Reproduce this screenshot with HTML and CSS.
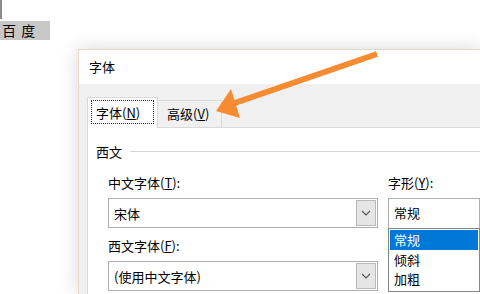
FILE: index.html
```html
<!DOCTYPE html>
<html lang="zh">
<head>
<meta charset="utf-8">
<link rel="stylesheet" href="styles.css">
</head>
<body>
<div class="doc">
  <div class="caret"></div>
  <div class="sel">百 度</div>
</div>

<div class="dialog">
  <div class="titlebar">字体</div>
  <div class="body">
    <div class="tabs">
      <div class="tab active"><span class="focus">字体(<u>N</u>)</span></div>
      <div class="tab">高级(<u>V</u>)</div>
    </div>
    <div class="panel">
      <div class="group"><span>西文</span><i class="rule"></i></div>
      <div class="fields">
        <div class="col-left">
          <div class="label">中文字体(<u>T</u>):</div>
          <div class="combo"><span>宋体</span><b class="dd"><svg width="10" height="6" viewBox="0 0 10 6"><path d="M1 1 L5 5 L9 1" fill="none" stroke="#555" stroke-width="1.1"/></svg></b></div>
          <div class="label second">西文字体(<u>F</u>):</div>
          <div class="combo"><span>(使用中文字体)</span><b class="dd"><svg width="10" height="6" viewBox="0 0 10 6"><path d="M1 1 L5 5 L9 1" fill="none" stroke="#555" stroke-width="1.1"/></svg></b></div>
        </div>
        <div class="col-right">
          <div class="label">字形(<u>Y</u>):</div>
          <div class="edit">常规</div>
          <ul class="list">
            <li class="on">常规</li>
            <li>倾斜</li>
            <li>加粗</li>
          </ul>
        </div>
      </div>
    </div>
  </div>
</div>

<svg class="arrow" width="480" height="294" viewBox="0 0 480 294">
  <line x1="377" y1="54" x2="226" y2="106" stroke="#f68b32" stroke-width="6"/>
  <polygon points="216,111 231,89 240,118" fill="#f68b32"/>
</svg>
</body>
</html>
```
FILE: styles.css
```css
html, body {
  margin: 0;
  padding: 0;
}
body {
  width: 480px;
  height: 294px;
  overflow: hidden;
  background: #ffffff;
  position: relative;
  font-family: "Noto Sans CJK SC", "Noto Sans", sans-serif;
  font-size: 13px;
  color: #000;
}
.doc {
  display: flex;
  flex-direction: column;
}
.caret {
  width: 2px;
  height: 19px;
  background: #8a8a8a;
}
.sel {
  margin-top: 2px;
  width: 48px;
  height: 19px;
  line-height: 19px;
  background: #c8c8c8;
  padding-left: 2px;
  font-size: 14px;
  letter-spacing: 1px;
}
.dialog {
  position: absolute;
  left: 78px;
  top: 49px;
  width: 401px;
  height: 244px;
  overflow: hidden;
  background: #f0f0f0;
  border: 1px solid #e2dcc8;
  border-right: none;
  border-bottom: none;
  box-shadow: 0 0 18px rgba(0, 0, 0, 0.16);
  display: flex;
  flex-direction: column;
}
.titlebar {
  flex: none;
  height: 34px;
  line-height: 34px;
  background: #ffffff;
  padding-left: 10px;
  font-size: 13px;
}
.body {
  padding: 13px 0 0 8px;
  display: flex;
  flex-direction: column;
}
.tabs {
  display: flex;
  align-items: flex-end;
  height: 30px;
}
.tab {
  height: 27px;
  line-height: 26px;
  padding: 0 9px;
  border: 1px solid #d9d9d9;
  border-bottom: none;
  background: #f0f0f0;
  box-sizing: border-box;
  margin-left: -1px;
  width: 65px;
}
.tab.active {
  width: 71px;
  height: 31px;
  background: #ffffff;
  margin-left: 0;
  margin-bottom: -1px;
  padding: 2px 3px 0 3px;
  position: relative;
  z-index: 1;
}
.focus {
  display: block;
  border: 1px dotted #333;
  height: 24px;
  line-height: 23px;
  padding: 0 4px;
  box-sizing: border-box;
}
u {
  text-decoration: underline;
  text-underline-offset: 1px;
}
.panel {
  background: #ffffff;
  border: 1px solid #d9d9d9;
  border-right: none;
  height: 200px;
  padding: 14px 0 0 8px;
}
.group {
  display: flex;
  align-items: center;
  height: 18px;
}
.rule {
  flex: 1;
  height: 1px;
  background: #d7d7d7;
  margin-left: 8px;
}
.fields {
  display: flex;
  gap: 10px;
  padding: 14px 0 0 12px;
}
.col-left {
  width: 270px;
  display: flex;
  flex-direction: column;
}
.col-right {
  flex: 1;
  display: flex;
  flex-direction: column;
}
.label {
  height: 18px;
  line-height: 18px;
  margin-bottom: 6px;
}
.label.second {
  margin-top: 9px;
}
.combo {
  height: 30px;
  border: 1px solid #adadad;
  box-sizing: border-box;
  background: #fff;
  display: flex;
  align-items: center;
  justify-content: space-between;
  padding: 1px 1px 1px 5px;
}
.dd {
  width: 20px;
  height: 26px;
  background: #e5e5e5;
  border: 1px solid #b9b9b9;
  box-sizing: border-box;
  display: flex;
  align-items: center;
  justify-content: center;
}
.edit {
  height: 30px;
  line-height: 28px;
  border: 1px solid #adadad;
  border-bottom: none;
  box-sizing: border-box;
  padding-left: 5px;
  background: #fff;
}
.list {
  list-style: none;
  margin: 0;
  padding: 1px 1px;
  border: 1px solid #828790;
  height: 64px;
  box-sizing: border-box;
}
.list li {
  height: 19px;
  line-height: 19px;
  padding-left: 4px;
}
.list li.on {
  height: 20px;
  line-height: 20px;
  background: #0078d7;
  color: #fff;
}
.arrow {
  position: absolute;
  left: 0;
  top: 0;
  pointer-events: none;
}
```
